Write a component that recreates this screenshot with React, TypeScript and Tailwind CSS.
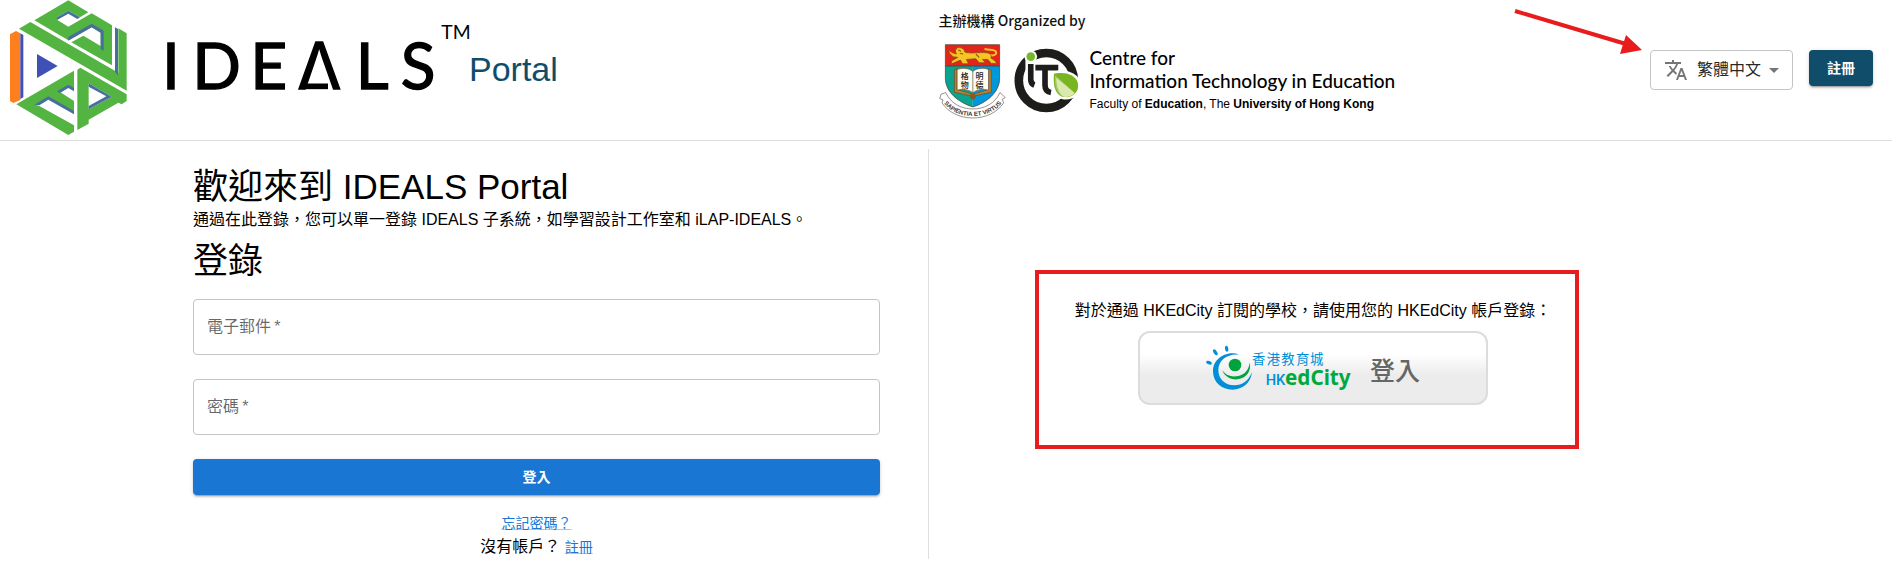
import { MdArrowDropDown, MdTranslate } from "react-icons/md";

const fields = [
  { id: "email", label: "電子郵件", type: "email" },
  { id: "password", label: "密碼", type: "password" },
];

const IdealsLogo = () => (
  <svg viewBox="0 0 1407 405" className="h-[135px] w-[469px] shrink-0 overflow-visible" role="img" aria-label="IDEALS">
    <g fill="#53b441">
      <path d="M103 61 205 1 265 37 240 52 205 32 171 52 171 59 205 80 275 40 336 76 336 196 214 127 250 107 302 138 302 98 275 82 205 121Z" />
      <path d="M57 86 91 66 355 218 355 85 380 100 380 272Z" />
      <path d="M49 313 222 212 222 395 205 405Z" />
      <path d="M232 209 241 203 380 283 380 303 365 313 355 308 266 359 266 371 232 390Z" />
    </g>
    <path fill="#fff" d="M180 276 205 262 222 272 222 303ZM106 314 145 292 222 336 222 376 118 318ZM266 250 335 290 266 328Z" />
    <g fill="#466f9b">
      <path d="M171 52 205 32 240 52 232 57 205 41 171 60Z" />
      <path d="M205 111 275 71 311 92 311 152 302 147 302 98 275 82 205 122Z" />
      <path d="M345 82 354 87 354 226 345 216Z" />
      <path d="M171 274 205 254 222 264 222 274 205 264 180 279Z" />
      <path d="M103 314 145 289 222 333 222 343 145 299 118 316Z" />
      <path d="M266 250 335 290 266 328 266 318 319 289 266 260Z" />
    </g>
    <path fill="#ff7f1e" d="M30 103 48 93 61 100 61 300 40 309 30 303Z" />
    <path fill="#3f51b5" d="M61 100 70 105 70 292 61 297ZM111 162 173 198 111 234Z" />
    <g className="font-[Lato]" fontSize="192" stroke="#000" strokeWidth="4">
      <text x="486 577 751" y="266">
        IDE
      </text>
      <text x="892" y="266" className="font-[Inter]">
        Λ
      </text>
      <text x="1067 1202" y="266">
        LS
      </text>
    </g>
    <path d="M905 259H984" stroke="#000" strokeWidth="17" />
    <text x="1324" y="117" fontSize="58" className="font-[Lato]">
      TM
    </text>
  </svg>
);

const UniversityCrest = () => (
  <svg viewBox="40 130 200 224" className="h-[75px] w-[67px]" aria-hidden="true">
    <path fill="#0aa38f" d="M59 195H141V318C100 305 59 275 59 232Z" />
    <path fill="#0098dc" d="M141 195H221V232C221 275 182 305 141 318Z" />
    <path fill="#e1251b" d="M59 132H221V196H59Z" />
    <path fill="none" stroke="#4a3a2c" strokeWidth="2" d="M59 132H221V232C221 275 182 305 141 318 100 305 59 275 59 232ZM59 196H221" />
    <path fill="none" stroke="#f7c325" strokeWidth="6" d="M190 162C206 168 216 158 208 151 200 145 186 150 176 144" />
    <g fill="#f7c325" stroke="#7a4a10" strokeWidth="2">
      <path d="M94 142C104 138 116 144 117 154 132 160 160 154 180 156 196 157 197 165 195 172L207 180 213 188H196L186 176 170 176 178 186H160L150 174 122 176 128 189H110L104 178 90 184 76 190 78 180 96 170 82 168 72 158 68 148 80 156 92 160C88 152 88 146 94 142Z" />
    </g>
    <path d="M98 148 106 152M102 158 112 160M150 160 160 170" stroke="#7a4a10" strokeWidth="3" />
    <path fill="#b9822f" stroke="#6d4a1c" strokeWidth="2" d="M86 208 94 204V266L141 280 188 266V204L196 208V274L150 284 141 296 132 284 86 274Z" />
    <path fill="#fffdf2" stroke="#5a4a35" strokeWidth="2" d="M94 206C110 200 130 202 141 212 152 202 172 200 188 206V268C172 263 152 266 141 276 130 266 110 263 94 268Z" />
    <path stroke="#5a4a35" strokeWidth="2" d="M141 212V276" />
    <path fill="#8a5a1c" d="M132 282 141 276 150 282 150 290 141 297 132 290Z" />
    <g fontSize="24" fill="#222" className="font-['Noto_Sans_CJK_TC'] font-medium">
      <text x="105" y="236">
        格
      </text>
      <text x="105" y="262">
        物
      </text>
      <text x="149" y="236">
        明
      </text>
      <text x="149" y="262">
        德
      </text>
    </g>
    <path
      fill="#fff"
      stroke="#6b5b50"
      strokeWidth="2"
      d="M46 280 60 275C74 306 104 324 141 324 178 324 208 306 222 275L238 290 229 295 233 306C214 334 180 351 141 351 102 351 68 334 49 306L52 297 42 293Z"
    />
    <path id="motto" fill="none" d="M48 296C66 328 100 345 141 345 182 345 216 328 234 296" />
    <text fontSize="18" textAnchor="middle" className="font-['Liberation_Sans'] font-bold" fill="#3c3430">
      <textPath href="#motto" startOffset="50%">
        SAPIENTIA ET VIRTUS
      </textPath>
    </text>
  </svg>
);

const CiteLogo = () => (
  <svg viewBox="265 144 198 196" className="h-[65px] w-[66px]" aria-hidden="true">
    <circle cx="362" cy="242" r="83" fill="none" stroke="#1d1d1b" strokeWidth="26" />
    <path fill="none" stroke="#fff" strokeWidth="32" d="M315 168V236C315 246 319 253 326 256M328 203H398M356 203V256C356 270 362 276 374 278" />
    <circle cx="315" cy="170" r="19" fill="#fff" />
    <circle cx="315" cy="170" r="13" fill="#76b82a" />
    <path fill="none" stroke="#1d1d1b" strokeWidth="17" d="M315 192V238C315 248 318 253 326 256M329 203H398M358 203V256C358 270 364 276 376 278" />
    <path fill="#8fbf21" stroke="#fff" strokeWidth="14" d="M385 222C412 214 452 222 457 250 462 276 442 294 416 292 390 288 382 262 385 222Z" />
    <path fill="#8fbf21" d="M385 222C412 214 452 222 457 250 462 276 442 294 416 292 390 288 382 262 385 222Z" />
    <path fill="#dbe8ae" d="M388 226 448 280C438 290 426 293 416 291 396 288 386 262 388 226Z" />
    <path fill="#5fa81f" d="M385 222C382 262 390 288 416 292 400 284 392 258 392 234L448 280C458 270 460 258 456 248 448 224 412 214 385 222Z" opacity=".45" />
  </svg>
);

const HkEdCityLogo = () => (
  <svg viewBox="555 268 438 138" className="h-[46px] w-[146px] overflow-visible" role="img" aria-label="HKedCity">
    <g fill="#008fd7">
      <path d="M655 297C624 284 576 304 576 347 576 380 602 402 634 402 666 402 690 380 693 350 682 376 664 389 640 389 612 389 592 370 592 343 592 312 622 292 655 297Z" />
      <ellipse cx="564" cy="321" rx="9" ry="5" transform="rotate(20 564 321)" />
      <ellipse cx="583" cy="290" rx="10" ry="5" transform="rotate(58 583 290)" />
      <ellipse cx="617" cy="279" rx="9" ry="5" transform="rotate(82 617 279)" />
    </g>
    <g fill="#00a33e">
      <circle cx="642" cy="328" r="19" />
      <path d="M604 344C616 362 634 364 652 361 672 357 684 342 686 320 692 346 676 368 650 371 628 373 610 362 604 344Z" />
    </g>
    <text x="693 737 781 825 867" y="326" fontSize="40" fill="#008fd7" className="font-['Noto_Sans_CJK_TC']">
      香港教育城
    </text>
    <text x="734" y="387" fontSize="44" fill="#008fd7" className="font-[Roboto] font-medium">
      HK
    </text>
    <text x="792" y="387" fontSize="62" fill="#00a93c" className="font-['Noto_Sans'] font-bold">
      edCity
    </text>
  </svg>
);

const Header = () => (
  <header className="grid h-[141px] grid-cols-2 border-b border-[#dedede] pr-[19px]">
    <div className="flex items-start">
      <IdealsLogo />
      <span className="mt-12 text-[34px] leading-[42px] text-[#104d6b]">Portal</span>
    </div>
    <div className="flex items-start justify-between">
      <div className="pt-2 pl-0.5">
        <p className="font-['Noto_Sans_CJK_TC'] text-[14px] leading-6 font-medium text-[#111]">
          主辦機構 Organized by
        </p>
        <div className="mt-3 flex gap-2">
          <UniversityCrest />
          <div className="flex items-start gap-2.5">
            <div className="pt-1">
              <CiteLogo />
            </div>
            <div className="pt-0.5 text-black">
              <p className="font-[Lato] text-[19px] leading-[23px] font-medium">
                Centre for
                <br />
                Information Technology in Education
              </p>
              <p className="text-[12px] leading-6">
                Faculty of <b>Education</b>, The <b>University of Hong Kong</b>
              </p>
            </div>
          </div>
        </div>
      </div>
      <div className="flex items-start gap-4 pt-[50px]">
        <div className="relative">
          <svg
            viewBox="0 0 132 46"
            className="pointer-events-none absolute right-full bottom-9 mr-1.5 h-[46px] w-[132px]"
            aria-hidden="true"
          >
            <path d="M3 3 114 36" stroke="#e81c1c" strokeWidth="4" />
            <path d="M114 27 130 42 108 46Z" fill="#e81c1c" />
          </svg>
          <label htmlFor="language" className="absolute top-2 left-3.5 text-[#757575]">
            <MdTranslate className="size-6" />
          </label>
          <select
            id="language"
            aria-label="語言"
            className="h-10 w-[143px] appearance-none rounded border border-[#c4c4c4] bg-transparent pl-[46px] text-[16px] text-black/87"
          >
            <option>繁體中文</option>
          </select>
          <MdArrowDropDown className="pointer-events-none absolute top-2 right-[7px] size-6 text-[#757575]" />
        </div>
        <button
          type="button"
          className="h-9 w-16 rounded bg-[#104d6b] text-[14px] font-bold text-white shadow-[0_3px_1px_-2px_rgba(0,0,0,0.2),0_2px_2px_rgba(0,0,0,0.14),0_1px_5px_rgba(0,0,0,0.12)]"
        >
          註冊
        </button>
      </div>
    </div>
  </header>
);

const LoginForm = () => (
  <section className="border-r border-[#dedede] pt-[17px] pr-12">
    <h1 className="text-[35px] leading-[42px]">歡迎來到 IDEALS Portal</h1>
    <p className="text-[16px] leading-6">通過在此登錄，您可以單一登錄 IDEALS 子系統，如學習設計工作室和 iLAP-IDEALS。</p>
    <h2 className="mt-2 text-[35px] leading-[42px]">登錄</h2>
    <form className="mt-[17px] flex flex-col gap-6">
      {fields.map((field) => (
        <div key={field.id} className="relative">
          <input
            id={field.id}
            type={field.type}
            required
            className="peer block h-14 w-full rounded border border-[#c4c4c4] px-3.5 text-[16px]"
          />
          <label
            htmlFor={field.id}
            className="pointer-events-none absolute top-4 left-3.5 text-[16px] leading-6 text-black/60 peer-valid:hidden peer-focus:hidden"
          >
            {field.label}&thinsp;*
          </label>
        </div>
      ))}
      <button
        type="submit"
        className="h-9 rounded bg-[#1976d2] text-[14px] font-bold text-white shadow-[0_3px_1px_-2px_rgba(0,0,0,0.2),0_2px_2px_rgba(0,0,0,0.14),0_1px_5px_rgba(0,0,0,0.12)]"
      >
        登入
      </button>
    </form>
    <div className="mt-4 text-center text-[16px] leading-6">
      <p>
        <a href="#forgot" className="text-[14px] text-[#1976d2] underline decoration-[#1976d2]/40">
          忘記密碼？
        </a>
      </p>
      <p>
        沒有帳戶？{" "}
        <a href="#register" className="text-[14px] text-[#1976d2] underline decoration-[#1976d2]/40">
          註冊
        </a>
      </p>
    </div>
  </section>
);

const HkEdCityLogin = () => (
  <section className="flex items-center justify-center pr-0.5 pb-1">
    <div className="relative flex flex-col items-center gap-2">
      <p className="text-[16px] leading-6">對於通過 HKEdCity 訂閱的學校，請使用您的 HKEdCity 帳戶登錄：</p>
      <button
        type="button"
        className="flex h-[74px] w-[350px] items-center justify-center gap-[18px] rounded-xl border-2 border-[#dcdcdc] bg-linear-to-b from-white from-30% to-[#ececec] to-60%"
      >
        <HkEdCityLogo />
        <span className="pt-2 text-[25px] font-medium text-[#666]">登入</span>
      </button>
      <div className="pointer-events-none absolute -top-[29px] -right-7 -bottom-11 -left-10 border-4 border-[#e81c1c]" />
    </div>
  </section>
);

export default function App() {
  return (
    <div className="bg-white font-['Liberation_Sans','Noto_Sans_CJK_TC',sans-serif] text-black">
      <Header />
      <main className="mx-auto mt-2 grid w-4/5 max-w-[1506px] grid-cols-[736fr_770fr]">
        <LoginForm />
        <HkEdCityLogin />
      </main>
    </div>
  );
}
